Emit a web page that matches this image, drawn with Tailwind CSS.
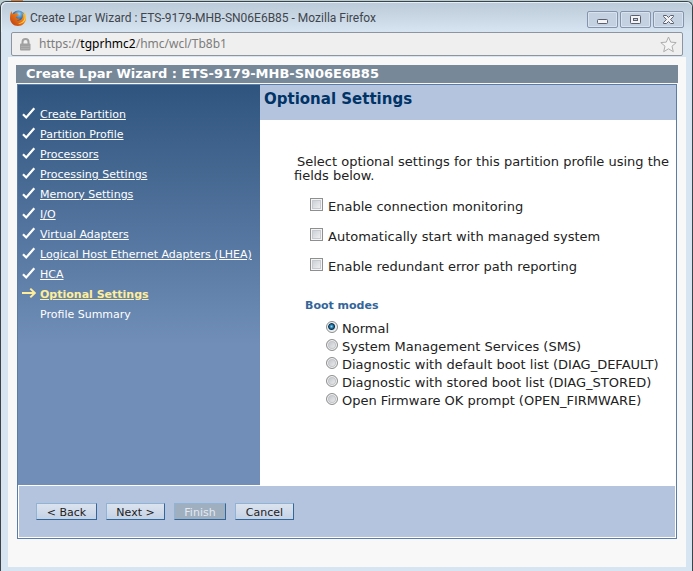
<!DOCTYPE html>
<html lang="en">
<head>
<meta charset="utf-8">
<title>Create Lpar Wizard : ETS-9179-MHB-SN06E6B85</title>
<script src="https://cdn.jsdelivr.net/npm/@tailwindcss/browser@4"></script>
</head>
<body class="flex min-h-screen flex-col bg-[#b9ccd0] font-['DejaVu_Sans',Verdana,sans-serif] text-[13px] text-[#222]">
<svg class="hidden">
  <symbol id="check" viewBox="0 0 14 14"><path d="M1 8.2l3.2 3.3L12.3 2.2" fill="none" stroke="#fff" stroke-width="2.2"/></symbol>
  <symbol id="arrow" viewBox="0 0 14 14"><path d="M0 7h13M8.3 2.6L12.8 7l-4.5 4.4" fill="none" stroke="#ffee99" stroke-width="2"/></symbol>
</svg>
<div class="h-px pl-[11px]"><div class="h-px w-3 bg-[#d9782e]"></div></div>
<div class="flex flex-1 flex-col rounded-t-md border-x border-t border-[#3d4449] bg-[#d7e4f1]">
  <header class="flex h-[30px] items-start justify-between rounded-t-md border-t border-l border-[#e6eff6] bg-linear-to-b from-[#bccbd9] to-[#d7e4f1] pr-2 pl-2">
    <div class="flex items-center gap-1 pt-[7px]">
      <svg class="size-4" viewBox="0 0 16 16">
        <defs>
          <radialGradient id="globe" cx=".55" cy=".25" r=".75"><stop offset="0" stop-color="#9bd4f2"/><stop offset=".5" stop-color="#2b6fb4"/><stop offset="1" stop-color="#12275f"/></radialGradient>
          <linearGradient id="fox" x1="1" y1="0" x2="0" y2="1"><stop offset="0" stop-color="#ffd83c"/><stop offset=".4" stop-color="#ee7d18"/><stop offset="1" stop-color="#b8360f"/></linearGradient>
        </defs>
        <circle cx="8.3" cy="7.3" r="6.8" fill="url(#globe)"/>
        <path d="M1.500 1C.5 3 0 5.300 0 8c0 4.500 3.500 8 8 8s8-3.500 8-8c0-2.400-.7-4.700-2.300-6.300.7 1.500.9 2.500.7 3.500-.4-1.300-1.200-2.300-2.200-3 1.200 2.600.9 5-.3 6.600-1.200 1.700-3.500 2.200-5.200 1.200 1.400 0 2.400-.4 3.200-1.100-.5-.9-1.800-.1-2.800-.5C6.200 8 5.700 7.400 5.800 6.700c.5-.3 1.300 0 1.900-.1.1-.8.900-1.100 1.600-1.600-.7-.4-1.600-.4-2.100-.7-.4-.4-.2-1.200.3-1.800-1.200.1-2.300.6-2.900 1.300-.7-.2-1.200-.1-1.800.2C2.200 3.300 1.700 2.300 1.500 1z" fill="url(#fox)"/>
        <path d="M14 2.500c1.300 2.500 1 6-.7 8.300-1.300 1.700-3.400 2.700-5.500 2.500 3 1.200 6.500-.5 7.500-3.700.8-2.600.1-5.500-1.300-7.100z" fill="#ffd24a"/>
      </svg>
      <h1 class="font-[Roboto,'Segoe_UI',sans-serif] text-xs leading-4 text-[#3f454c]">Create Lpar Wizard : ETS-9179-MHB-SN06E6B85 - Mozilla Firefox</h1>
    </div>
    <div class="flex gap-[2px] pt-2">
      <button aria-label="Minimize" class="flex h-[17px] w-[31px] items-center justify-center rounded-xs border border-[#8494ae] bg-[#c3d1e1] shadow-[inset_0_0_0_1px_#d8e3ee]"><svg class="h-[11px] w-[13px]" viewBox="0 0 13 11"><rect x="1.500" y="5.500" width="10" height="4" rx=".8" fill="#f4f4f4" stroke="#5a6070"/></svg></button>
      <button aria-label="Maximize" class="flex h-[17px] w-[31px] items-center justify-center rounded-xs border border-[#8494ae] bg-[#c3d1e1] shadow-[inset_0_0_0_1px_#d8e3ee]"><svg class="h-[11px] w-[13px]" viewBox="0 0 13 11"><rect x="1.500" y="1.500" width="10" height="8" rx=".8" fill="#f4f4f4" stroke="#5a6070"/><rect x="4.500" y="4.500" width="4" height="2" fill="#c3d1e1" stroke="#5a6070"/></svg></button>
      <button aria-label="Close" class="flex h-[17px] w-[31px] items-center justify-center rounded-xs border border-[#8494ae] bg-[#c3d1e1] shadow-[inset_0_0_0_1px_#d8e3ee]"><svg class="h-[11px] w-[13px]" viewBox="0 0 13 11"><path d="M1.500 1.500h3l2 2 2-2h3v1L8.600 5.500l2.900 3v1h-3l-2-2-2 2h-3v-1l2.900-3-2.900-3z" fill="#f4f4f4" stroke="#5a6070"/></svg></button>
    </div>
  </header>
  <div class="mr-[9px] ml-[10px] flex h-6 items-center rounded-xs border border-[#8d959e] bg-[#efefef] pr-[5px] pl-2">
    <svg class="h-[13px] w-[11px]" viewBox="0 0 11 13"><path d="M2.500 6V4a3 3 0 0 1 6 0v2" fill="none" stroke="#a0a0a0" stroke-width="2"/><rect y="5.500" width="10.500" height="7" rx="1" fill="#a0a0a0"/><path d="M1 8.500h8.500M1 10.500h8.500" stroke="#b4b4b4" stroke-width=".7"/></svg>
    <p class="ml-2 flex-1 font-['Noto_Sans','Open_Sans',sans-serif] text-xs leading-4 text-[#7c7c7c]">https://<span class="text-black">tgprhmc2</span>/hmc/wcl/Tb8b1</p>
    <button aria-label="Bookmark"><svg class="size-[17px]" viewBox="0 0 17 17"><path d="M8.500 1l2.200 5.100 5.500.5-4.200 3.600 1.300 5.500-4.800-2.900-4.800 2.900L5 10.200.8 6.600l5.500-.5z" fill="#f5f5f5" stroke="#adadad" stroke-linejoin="round"/></svg></button>
  </div>
  <main class="mt-px mr-[6px] mb-1 ml-[7px] flex-1 bg-[#f8f8f8] px-2 pt-2">
    <h2 class="mb-px h-[18px] bg-[#778899] pl-[10px] text-[13px] leading-[18px] font-bold text-white">Create Lpar Wizard : ETS-9179-MHB-SN06E6B85</h2>
    <div class="mx-px border border-[#5a7ca7] bg-white">
      <div class="flex h-[400px]">
        <nav class="w-[242px] shrink-0 bg-linear-to-b from-[#2f557e] to-[#708eb8] to-65% pt-[18px] pl-1 text-[11px] text-white">
          <ul>
            <li class="flex h-5 items-center gap-1 whitespace-nowrap"><svg class="size-[14px]"><use href="#check"/></svg><a href="#" class="pt-1 underline">Create Partition</a></li>
            <li class="flex h-5 items-center gap-1 whitespace-nowrap"><svg class="size-[14px]"><use href="#check"/></svg><a href="#" class="pt-1 underline">Partition Profile</a></li>
            <li class="flex h-5 items-center gap-1 whitespace-nowrap"><svg class="size-[14px]"><use href="#check"/></svg><a href="#" class="pt-1 underline">Processors</a></li>
            <li class="flex h-5 items-center gap-1 whitespace-nowrap"><svg class="size-[14px]"><use href="#check"/></svg><a href="#" class="pt-1 underline">Processing Settings</a></li>
            <li class="flex h-5 items-center gap-1 whitespace-nowrap"><svg class="size-[14px]"><use href="#check"/></svg><a href="#" class="pt-1 underline">Memory Settings</a></li>
            <li class="flex h-5 items-center gap-1 whitespace-nowrap"><svg class="size-[14px]"><use href="#check"/></svg><a href="#" class="pt-1 underline">I/O</a></li>
            <li class="flex h-5 items-center gap-1 whitespace-nowrap"><svg class="size-[14px]"><use href="#check"/></svg><a href="#" class="pt-1 underline">Virtual Adapters</a></li>
            <li class="flex h-5 items-center gap-1 whitespace-nowrap"><svg class="size-[14px]"><use href="#check"/></svg><a href="#" class="pt-1 underline">Logical Host Ethernet Adapters (LHEA)</a></li>
            <li class="flex h-5 items-center gap-1 whitespace-nowrap"><svg class="size-[14px]"><use href="#check"/></svg><a href="#" class="pt-1 underline">HCA</a></li>
            <li class="flex h-5 items-center gap-1 font-bold whitespace-nowrap text-[#ffee99]"><svg class="size-[14px]"><use href="#arrow"/></svg><a href="#" class="pt-1 underline">Optional Settings</a></li>
            <li class="flex h-5 items-center pt-1 pl-[18px] whitespace-nowrap">Profile Summary</li>
          </ul>
        </nav>
        <section class="min-w-0 flex-1">
          <h3 class="h-[35px] bg-[#b5c4de] pl-1 text-[15px] leading-7 font-bold text-[#003366]">Optional Settings</h3>
          <form class="pr-[2px] pl-[34px]">
            <p class="pt-[35px] indent-[3px] leading-[14px]">Select optional settings for this partition profile using the fields below.</p>
            <div class="mt-[6px] pl-4">
              <label class="flex h-[30px] items-center gap-[5px]"><input type="checkbox" class="size-[13px] appearance-none border border-[#8e8f8f] bg-linear-to-br from-[#c4c9d0] to-[#f6f6f6] shadow-[inset_0_0_0_1px_#f4f4f4,inset_0_0_0_2px_#c6cad0]"><span class="pt-[6px]">Enable connection monitoring</span></label>
              <label class="flex h-[30px] items-center gap-[5px]"><input type="checkbox" class="size-[13px] appearance-none border border-[#8e8f8f] bg-linear-to-br from-[#c4c9d0] to-[#f6f6f6] shadow-[inset_0_0_0_1px_#f4f4f4,inset_0_0_0_2px_#c6cad0]"><span class="pt-[6px]">Automatically start with managed system</span></label>
              <label class="flex h-[30px] items-center gap-[5px]"><input type="checkbox" class="size-[13px] appearance-none border border-[#8e8f8f] bg-linear-to-br from-[#c4c9d0] to-[#f6f6f6] shadow-[inset_0_0_0_1px_#f4f4f4,inset_0_0_0_2px_#c6cad0]"><span class="pt-[6px]">Enable redundant error path reporting</span></label>
            </div>
            <fieldset class="mt-[19px] pl-[11px]">
              <legend class="text-[11px] leading-4 font-bold text-[#336699]">Boot modes</legend>
              <div class="mt-1 pl-[21px]">
                <label class="flex h-[18px] items-center gap-1 whitespace-nowrap"><input type="radio" name="boot" checked class="size-3 appearance-none rounded-full border border-[#8e8f8f] bg-[#e4e6e8] bg-[radial-gradient(circle_at_45%_45%,#8fd6f5_0,#1a6b98_2px,#0b2f4c_3px,#e4e6e8_4px)] shadow-[inset_0_0_0_1px_#f4f4f4]"><span class="pt-1">Normal</span></label>
                <label class="flex h-[18px] items-center gap-1 whitespace-nowrap"><input type="radio" name="boot" class="size-3 appearance-none rounded-full border border-[#8e8f8f] bg-linear-to-br from-[#b8bcc2] to-[#f6f6f6] shadow-[inset_0_0_0_1px_#f4f4f4,inset_0_0_0_2px_#c4c6c9]"><span class="pt-1">System Management Services (SMS)</span></label>
                <label class="flex h-[18px] items-center gap-1 whitespace-nowrap"><input type="radio" name="boot" class="size-3 appearance-none rounded-full border border-[#8e8f8f] bg-linear-to-br from-[#b8bcc2] to-[#f6f6f6] shadow-[inset_0_0_0_1px_#f4f4f4,inset_0_0_0_2px_#c4c6c9]"><span class="pt-1">Diagnostic with default boot list (DIAG_DEFAULT)</span></label>
                <label class="flex h-[18px] items-center gap-1 whitespace-nowrap"><input type="radio" name="boot" class="size-3 appearance-none rounded-full border border-[#8e8f8f] bg-linear-to-br from-[#b8bcc2] to-[#f6f6f6] shadow-[inset_0_0_0_1px_#f4f4f4,inset_0_0_0_2px_#c4c6c9]"><span class="pt-1">Diagnostic with stored boot list (DIAG_STORED)</span></label>
                <label class="flex h-[18px] items-center gap-1 whitespace-nowrap"><input type="radio" name="boot" class="size-3 appearance-none rounded-full border border-[#8e8f8f] bg-linear-to-br from-[#b8bcc2] to-[#f6f6f6] shadow-[inset_0_0_0_1px_#f4f4f4,inset_0_0_0_2px_#c4c6c9]"><span class="pt-1">Open Firmware OK prompt (OPEN_FIRMWARE)</span></label>
              </div>
            </fieldset>
          </form>
        </section>
      </div>
      <footer class="m-px flex gap-[9px] bg-[#b5c4de] py-[17px] pl-[17px] text-[11px]">
        <button class="h-[17px] w-[61px] border border-t-[#8fb4d6] border-r-[#336699] border-b-[#336699] border-l-[#8fb4d6] bg-linear-to-b from-[#dbe3ef] to-[#c5d2e5] pt-px leading-[15px]">&lt; Back</button>
        <button class="h-[17px] w-[59px] border border-t-[#8fb4d6] border-r-[#336699] border-b-[#336699] border-l-[#8fb4d6] bg-linear-to-b from-[#dbe3ef] to-[#c5d2e5] pt-px leading-[15px]">Next &gt;</button>
        <button disabled class="h-[17px] w-[52px] border border-t-[#8fb4d6] border-r-[#336699] border-b-[#336699] border-l-[#8fb4d6] bg-[#9fafc0] pt-px leading-[15px] text-[#e3e9f0]">Finish</button>
        <button class="h-[17px] w-[59px] border border-t-[#8fb4d6] border-r-[#336699] border-b-[#336699] border-l-[#8fb4d6] bg-linear-to-b from-[#dbe3ef] to-[#c5d2e5] pt-px leading-[15px]">Cancel</button>
      </footer>
    </div>
  </main>
</div>
</body>
</html>
